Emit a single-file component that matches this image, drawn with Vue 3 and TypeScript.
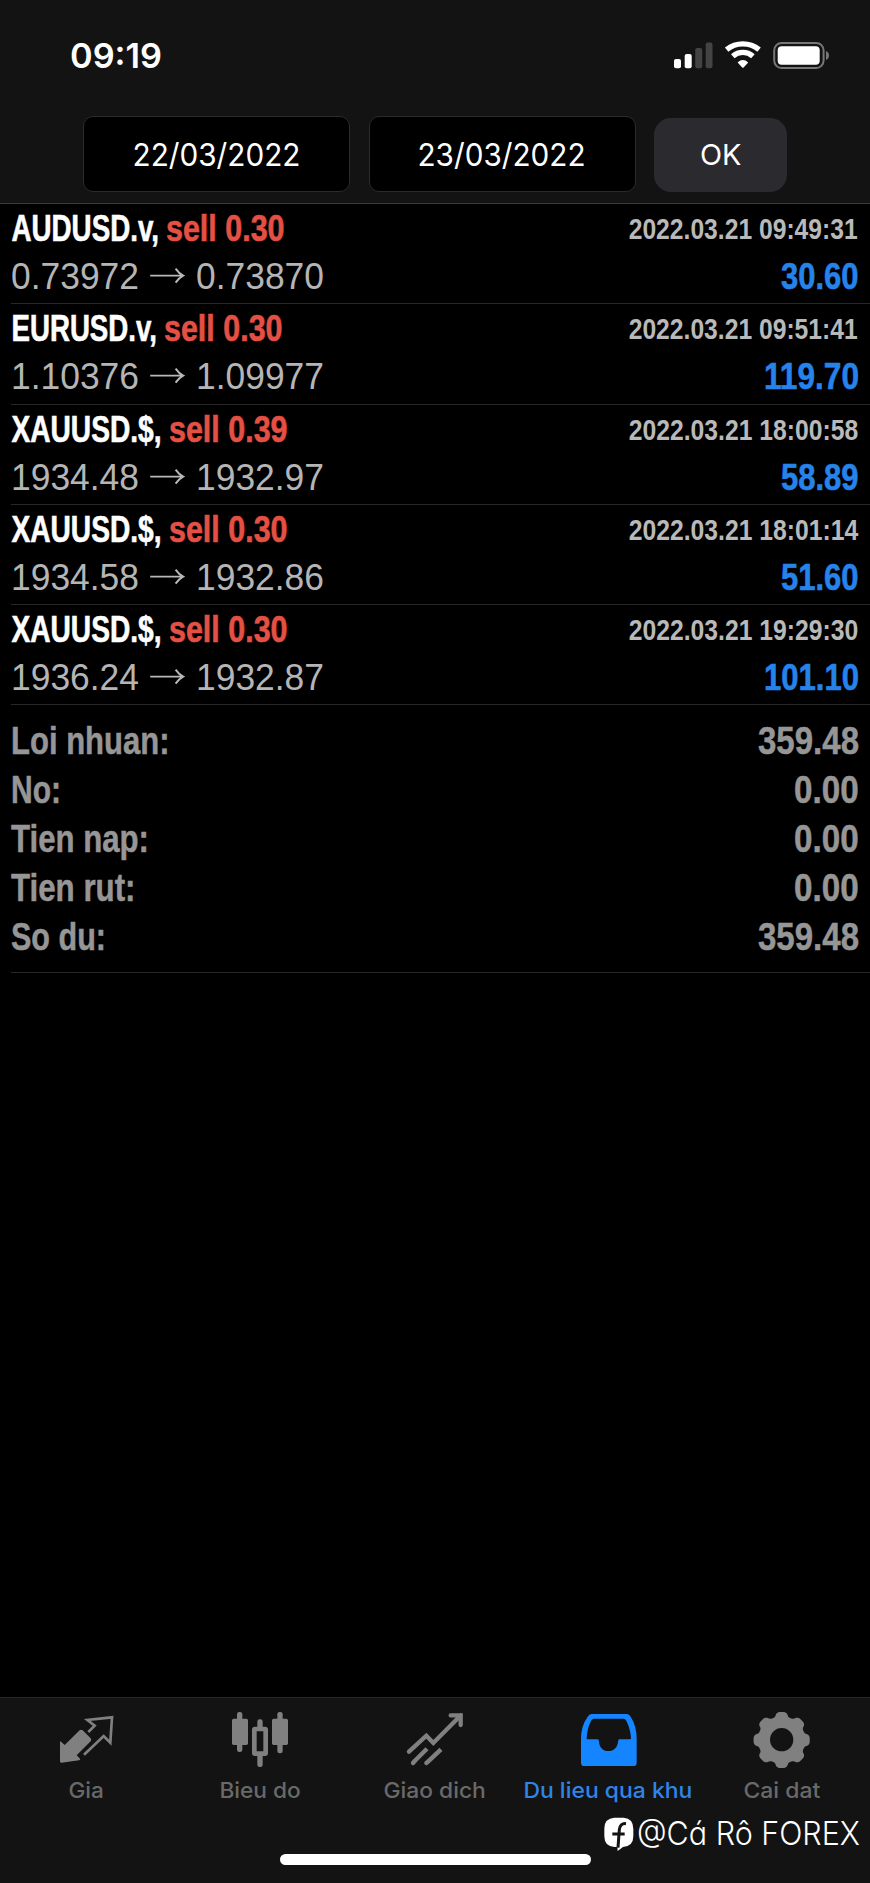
<script setup lang="ts">
interface Deal {
  symbol: string
  symbolWidth: number
  action: string
  time: string
  timeWidth: number
  open: string
  close: string
  profit: string
  profitWidth: number
}

interface SummaryLine {
  label: string
  labelWidth: number
  value: string
  valueWidth: number
}

const deals: Deal[] = [
  { symbol: 'AUDUSD.v,', symbolWidth: 147.5, action: 'sell 0.30', time: '2022.03.21 09:49:31', timeWidth: 229, open: '0.73972', close: '0.73870', profit: '30.60', profitWidth: 77.5 },
  { symbol: 'EURUSD.v,', symbolWidth: 145.5, action: 'sell 0.30', time: '2022.03.21 09:51:41', timeWidth: 229, open: '1.10376', close: '1.09977', profit: '119.70', profitWidth: 95 },
  { symbol: 'XAUUSD.$,', symbolWidth: 150, action: 'sell 0.39', time: '2022.03.21 18:00:58', timeWidth: 229.5, open: '1934.48', close: '1932.97', profit: '58.89', profitWidth: 77.5 },
  { symbol: 'XAUUSD.$,', symbolWidth: 150, action: 'sell 0.30', time: '2022.03.21 18:01:14', timeWidth: 229.5, open: '1934.58', close: '1932.86', profit: '51.60', profitWidth: 77.5 },
  { symbol: 'XAUUSD.$,', symbolWidth: 150, action: 'sell 0.30', time: '2022.03.21 19:29:30', timeWidth: 229.5, open: '1936.24', close: '1932.87', profit: '101.10', profitWidth: 95 },
]

const summary: SummaryLine[] = [
  { label: 'Loi nhuan:', labelWidth: 158.5, value: '359.48', valueWidth: 101 },
  { label: 'No:', labelWidth: 50, value: '0.00', valueWidth: 64.7 },
  { label: 'Tien nap:', labelWidth: 138, value: '0.00', valueWidth: 64.7 },
  { label: 'Tien rut:', labelWidth: 124.5, value: '0.00', valueWidth: 64.7 },
  { label: 'So du:', labelWidth: 95, value: '359.48', valueWidth: 101 },
]

const tabs = [
  { id: 'quotes', label: 'Gia', width: 36, box: '171 60 180 180' },
  { id: 'chart', label: 'Bieu do', width: 82, box: '693 60 180 180' },
  { id: 'trade', label: 'Giao dich', width: 103, box: '345 60 180 180' },
  { id: 'history', label: 'Du lieu qua khu', width: 169.5, box: '27 60 180 180' },
  { id: 'settings', label: 'Cai dat', width: 77.5, box: '549 60 180 180' },
]
const active = 'history'

// Outline of an eight-toothed gear centred on (cx, cy).
function gear(cx: number, cy: number): string {
  const profile: [number, number][] = [[-19, 71], [-15.5, 73], [-12, 80], [-9, 83], [-5, 84.5], [5, 84.5], [9, 83], [12, 80], [15.5, 73], [19, 71]]
  const pts: string[] = []
  for (let i = 0; i < 8; i++) {
    for (const [deg, r] of profile) {
      const a = ((i * 45 + deg) * Math.PI) / 180
      pts.push(`${(cx + r * Math.sin(a)).toFixed(1)} ${(cy - r * Math.cos(a)).toFixed(1)}`)
    }
  }
  return `M${pts.join('L')}Z`
}
const gearPath = `${gear(635, 150)}M670 149a35 35 0 1 0-70 0a35 35 0 1 0 70 0Z`
</script>

<template>
  <div class="screen">
    <header class="top">
      <div class="status">
        <svg class="clock" width="96" height="50"><text x="1" y="33" textLength="92" lengthAdjust="spacingAndGlyphs">09:19</text></svg>
        <svg class="indicators" width="160" height="34" viewBox="0 0 160 34">
          <g fill="#fff">
            <rect x="4" y="24" width="7" height="9.3" rx="2" />
            <rect x="14.7" y="19" width="7" height="14.3" rx="2" />
          </g>
          <g fill="#434343">
            <rect x="25.2" y="13" width="7" height="20.3" rx="2" />
            <rect x="35.7" y="7.5" width="6.8" height="25.8" rx="2" />
          </g>
          <g fill="none" stroke="#fff" stroke-width="5.4">
            <path d="M56.6 14.6A26 26 0 0 1 89.1 14.6" />
            <path d="M62.8 21.2A15.2 15.2 0 0 1 82.9 21.2" />
          </g>
          <path d="M67.6 27.4Q72.8 22.8 78.2 27.4L73.6 32.4Q72.9 33.1 72.2 32.4Z" fill="#fff" />
          <rect x="104.2" y="8" width="49.4" height="25" rx="7.4" fill="none" stroke="#777" stroke-width="2" />
          <rect x="107.7" y="11.2" width="42" height="18.6" rx="4" fill="#fff" />
          <path d="M156 16Q159 17.4 159 20.5T156 25Z" fill="#777" />
        </svg>
      </div>
      <div class="filters">
        <div class="field"><svg width="170" height="74"><text x="0.5" y="48.5" textLength="168" lengthAdjust="spacingAndGlyphs">22/03/2022</text></svg></div>
        <div class="field"><svg width="170" height="74"><text x="0.5" y="48.5" textLength="168" lengthAdjust="spacingAndGlyphs">23/03/2022</text></svg></div>
        <button class="ok"><svg width="42" height="74"><text x="0" y="47.3" textLength="41.5" lengthAdjust="spacingAndGlyphs">OK</text></svg></button>
      </div>
    </header>

    <main class="content">
      <article v-for="(d, i) in deals" :key="i" class="deal">
        <div class="line">
          <div class="title">
            <svg :width="d.symbolWidth" height="50"><text class="symbol" x="0.5" y="37.3" :textLength="d.symbolWidth" lengthAdjust="spacingAndGlyphs">{{ d.symbol }}</text></svg>
            <svg width="119" height="50"><text class="action" x="0" y="37.3" textLength="118.5" lengthAdjust="spacingAndGlyphs">{{ d.action }}</text></svg>
          </div>
          <svg width="231" height="50"><text class="time" x="0.7" y="34.7" :textLength="d.timeWidth" lengthAdjust="spacingAndGlyphs">{{ d.time }}</text></svg>
        </div>
        <div class="line">
          <div class="prices">
            <svg width="129" height="46"><text class="price" x="0" y="34.8" textLength="128" lengthAdjust="spacingAndGlyphs">{{ d.open }}</text></svg>
            <svg width="35" height="46" viewBox="0 0 35 46" fill="none" stroke="#b8b8b8" stroke-width="1.9"><path d="M.2 21.6H33M25.6 14.6Q28.8 19.3 33.2 21.6Q28.8 23.9 25.6 28.6" /></svg>
            <svg width="129" height="46"><text class="price" x="0" y="34.8" textLength="128" lengthAdjust="spacingAndGlyphs">{{ d.close }}</text></svg>
          </div>
          <svg :width="d.profitWidth + 0.5" height="46"><text class="profit" x="0" y="34.8" :textLength="d.profitWidth" lengthAdjust="spacingAndGlyphs">{{ d.profit }}</text></svg>
        </div>
      </article>

      <section class="summary">
        <div v-for="s in summary" :key="s.label" class="total">
          <svg :width="s.labelWidth + 0.5" height="49"><text x="0" y="36.4" :textLength="s.labelWidth" lengthAdjust="spacingAndGlyphs">{{ s.label }}</text></svg>
          <svg :width="s.valueWidth + 0.5" height="49"><text x="0" y="36.4" :textLength="s.valueWidth" lengthAdjust="spacingAndGlyphs">{{ s.value }}</text></svg>
        </div>
      </section>
    </main>

    <nav class="tabs">
      <div v-for="t in tabs" :key="t.id" class="tab" :class="{ active: t.id === active }">
        <svg class="icon" width="60" height="60" :viewBox="t.box">
          <g v-if="t.id === 'quotes'">
            <path d="M265 126L284 107L262 90L336 82L331 158L311 138L252 194" fill="none" stroke="currentColor" stroke-width="8" />
            <path d="M180 156Q181 152 184 156L194 165L239 121Q243 117 248 121L272 145Q276 150 272 154L230 196L240 206Q242 210 237 211L185 218Q180 219 180 214Z" fill="currentColor" />
          </g>
          <g v-else-if="t.id === 'chart'" fill="currentColor">
            <rect x="696" y="86" width="48" height="79" rx="5" />
            <rect x="711" y="66" width="16" height="120" rx="7" />
            <rect x="816" y="86" width="48" height="79" rx="5" />
            <rect x="832" y="66" width="16" height="124" rx="7" />
            <rect x="772" y="88" width="16" height="34" rx="7" />
            <rect x="772" y="190" width="16" height="41" rx="7" />
            <rect x="763" y="117" width="34" height="74" rx="2" fill="none" stroke="currentColor" stroke-width="14" />
          </g>
          <g v-else-if="t.id === 'trade'" fill="none" stroke="currentColor" stroke-width="13">
            <path d="M357 185L409 137L430 159L511 77" stroke-linecap="round" />
            <path d="M482 76H512V105" stroke-linecap="round" />
            <path d="M411 176L374 213M453 178L414 215" />
            <path d="M374 213L369 219M414 215L409 219" stroke-linecap="round" />
          </g>
          <path
            v-else-if="t.id === 'history'"
            fill="currentColor"
            fill-rule="evenodd"
            d="M65 72H170Q178 72 182 80Q200 108 200 146V218Q200 228 190 228H43Q33 228 33 218V146Q33 108 53 80Q57 72 65 72ZM73 86Q67 86 64 91Q51 116 50 146Q50 148 53 148H82Q87 148 87 155C88 172 99 183 115 183S143 172 144 155Q144 148 149 148H179Q183 148 183 144Q181 116 169 92Q166 86 160 86Z"
          />
          <path v-else :d="gearPath" fill="currentColor" fill-rule="evenodd" />
        </svg>
        <svg class="label" :width="t.width" height="34"><text x="-0.6" y="26.9" :textLength="t.width - 0.6" lengthAdjust="spacingAndGlyphs">{{ t.label }}</text></svg>
      </div>
      <div class="home"></div>
      <div class="mark">
        <svg width="31" height="36" viewBox="101 382 93 108">
          <path d="M132 384H160Q189 386 189 418V440Q189 470 158 472L142 484L141 472H132Q102 470 102 440V416Q102 386 132 384Z" fill="#fff" />
          <path d="M167 402Q149 400 147 420L143 474M126 433H163" fill="none" stroke="#131313" stroke-width="9" />
        </svg>
        <svg width="224" height="40"><text x="0" y="28" textLength="223" lengthAdjust="spacingAndGlyphs">@Cá Rô FOREX</text></svg>
      </div>
    </nav>
  </div>
</template>

<style>
body {
  background: #000;
}
</style>

<style scoped>
.screen {
  width: 870px;
  height: 1883px;
  display: flex;
  flex-direction: column;
  background: #000;
  overflow: hidden;
}
svg {
  display: block;
  flex: none;
  overflow: visible;
}
.top {
  box-sizing: border-box;
  height: 204px;
  flex: none;
  background: #131313;
  border-bottom: 1px solid #3b3b3b;
}
.status {
  height: 116px;
  box-sizing: border-box;
  padding: 35px 40.5px 0 69px;
  display: flex;
  justify-content: space-between;
  align-items: flex-start;
}
.clock text {
  font: 600 34.5px Inter, sans-serif;
  fill: #fff;
}
.filters {
  display: flex;
  align-items: flex-start;
  gap: 18.5px;
  padding-left: 83px;
}
.field {
  box-sizing: border-box;
  width: 267px;
  height: 76px;
  display: flex;
  justify-content: center;
  background: #000;
  border: 1px solid #2b2b2b;
  border-radius: 10px;
}
.field text,
.ok text {
  font: 400 31px Inter, sans-serif;
  fill: #fff;
}
.ok text {
  font-size: 29px;
}
.ok {
  width: 133px;
  height: 74px;
  margin: 2px 0 0;
  padding: 0;
  display: flex;
  justify-content: center;
  background: #2b2b2f;
  border: 0;
  border-radius: 17px;
}
.content {
  flex: 1;
  padding-left: 11px;
}
.deal {
  box-sizing: border-box;
  height: 100.3px;
  border-bottom: 1px solid #282828;
}
.line {
  display: flex;
  justify-content: space-between;
  padding-right: 11px;
}
.title {
  display: flex;
  gap: 7.5px;
}
.prices {
  display: flex;
  gap: 10.3px;
}
.symbol,
.action,
.profit {
  font: 700 36px "Liberation Sans Narrow", "Liberation Sans", sans-serif;
  stroke-width: 0.6px;
}
.symbol {
  fill: #fff;
  stroke: #fff;
}
.action {
  fill: #e45043;
  stroke: #e45043;
}
.profit {
  fill: #2683ea;
  stroke: #2683ea;
}
.time {
  font: 700 29.5px "Liberation Sans Narrow", "Liberation Sans", sans-serif;
  fill: #b9b9b9;
}
.price {
  font: 400 36px "Liberation Sans", sans-serif;
  fill: #b5b5b5;
}
.summary {
  box-sizing: border-box;
  height: 267.5px;
  padding-top: 12.5px;
  border-bottom: 1px solid #282828;
}
.total {
  height: 49.1px;
  display: flex;
  justify-content: space-between;
  padding-right: 11px;
}
.total text {
  font: 700 38.5px "Liberation Sans Narrow", "Liberation Sans", sans-serif;
  fill: #969696;
  stroke: #969696;
  stroke-width: 0.5px;
}
.tabs {
  position: relative;
  box-sizing: border-box;
  height: 186px;
  flex: none;
  display: flex;
  padding-top: 12px;
  background: #131313;
  border-top: 1px solid #262626;
}
.tab {
  flex: 1;
  display: flex;
  flex-direction: column;
  align-items: center;
  color: #808080;
}
.label {
  margin-top: 1px;
}
.label text {
  font: 500 21.6px Inter, sans-serif;
  fill: #696969;
}
.active {
  color: #1485ff;
}
.active .label text {
  fill: #2f84e8;
}
.home {
  position: absolute;
  left: 280px;
  top: 156px;
  width: 311px;
  height: 11px;
  border-radius: 6px;
  background: #fff;
}
.mark {
  position: absolute;
  left: 603.5px;
  top: 119px;
  display: flex;
  gap: 2px;
}
.mark text {
  font: 300 32.5px Inter, sans-serif;
  font-feature-settings: "cv11", "ss03";
  fill: #fff;
}
</style>
